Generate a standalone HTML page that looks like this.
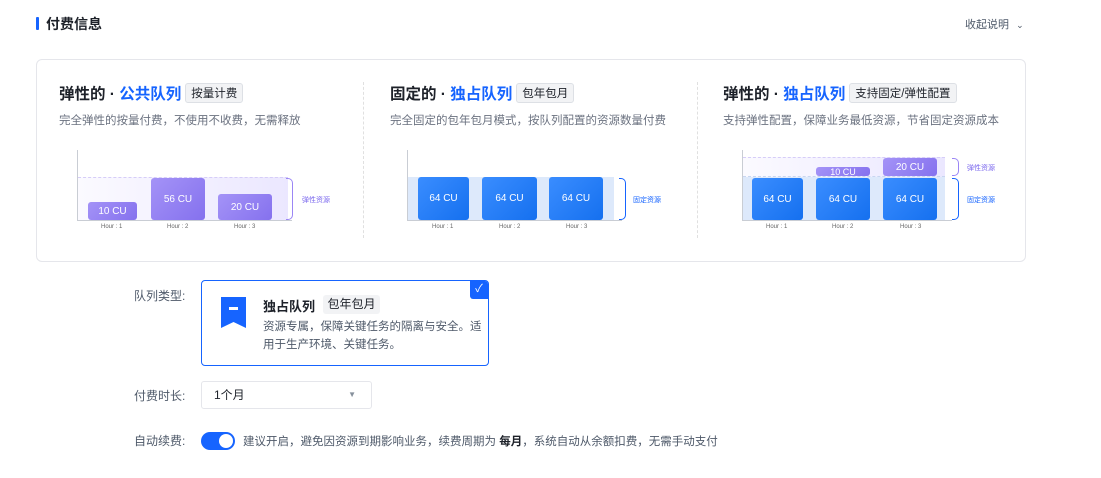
<!DOCTYPE html>
<html><head><meta charset="utf-8"><style>
*{margin:0;padding:0;box-sizing:border-box}
body{width:1101px;height:478px;background:#fff;font-family:"Liberation Sans","Noto Sans CJK SC",sans-serif;position:relative;overflow:hidden;color:#1d2129}
.a{position:absolute;white-space:nowrap}
.t{font-size:15.5px;font-weight:bold;color:#1d2129}
.t b{color:#1664ff;font-weight:bold}
.tag{display:inline-block;font-size:11.5px;font-weight:normal;border:1px solid #dde0e5;background:#f2f3f5;border-radius:3px;padding:1px 5px;vertical-align:2px;margin-left:4px;color:#1d2129}
.sub{font-size:11.5px;color:#6b7280}
.bar{position:absolute;border-radius:3px;color:#fff;font-size:10px;display:flex;align-items:center;justify-content:center}
.p{background:linear-gradient(135deg,#a493f7,#8571ee)}
.b{background:linear-gradient(135deg,#3a8dff,#1570ef)}
.hr{position:absolute;font-size:6px;color:#666}
.lbl{position:absolute;font-size:12px;color:#4e5969}
</style></head><body>
<div class="a" style="left:36px;top:17px;width:3px;height:13px;background:#1664ff;border-radius:1px"></div>
<div class="a" style="left:46px;top:14px;font-size:14px;font-weight:bold">付费信息</div>
<div class="a" style="left:965px;top:16px;font-size:11px;color:#4e5969">收起说明 <span style="font-size:9px;margin-left:4px">&#8964;</span></div>

<div class="a" style="left:36px;top:59px;width:990px;height:203px;border:1px solid #e5e6eb;border-radius:6px"></div>
<div class="a" style="left:363px;top:82px;height:156px;border-left:1px dashed #e0e0e0"></div>
<div class="a" style="left:697px;top:82px;height:156px;border-left:1px dashed #e0e0e0"></div>

<!-- S1 -->
<div class="a t" style="left:59px;top:82px">弹性的 · <b>公共队列</b><span class="tag">按量计费</span></div>
<div class="a sub" style="left:59px;top:112px">完全弹性的按量付费，不使用不收费，无需释放</div>
<div class="a" style="left:78px;top:177px;width:210px;height:43px;background:linear-gradient(90deg,#fbfaff,#ebe7ff);border-top:1px dashed #d6cdf8"></div>
<div class="a" style="left:77px;top:150px;height:71px;border-left:1px solid #c9cdd4"></div>
<div class="a" style="left:77px;top:220px;width:215px;border-top:1px solid #c9cdd4"></div>
<div class="bar p" style="left:88px;top:202px;width:49px;height:18px">10 CU</div>
<div class="bar p" style="left:151px;top:178px;width:54px;height:42px">56 CU</div>
<div class="bar p" style="left:218px;top:194px;width:54px;height:26px">20 CU</div>
<div class="hr" style="left:101px;top:224px">Hour : 1</div>
<div class="hr" style="left:167px;top:224px">Hour : 2</div>
<div class="hr" style="left:234px;top:224px">Hour : 3</div>
<div class="a" style="left:286px;top:178px;width:7px;height:42px;border:1px solid #9b86f5;border-left:none;border-radius:0 5px 5px 0"></div>
<div class="a" style="left:302px;top:195px;font-size:7px;color:#7b68ee">弹性资源</div>

<!-- S2 -->
<div class="a t" style="left:390px;top:82px">固定的 · <b>独占队列</b><span class="tag">包年包月</span></div>
<div class="a sub" style="left:390px;top:112px">完全固定的包年包月模式，按队列配置的资源数量付费</div>
<div class="a" style="left:408px;top:177px;width:206px;height:43px;background:#dde9fb"></div>
<div class="a" style="left:407px;top:150px;height:71px;border-left:1px solid #c9cdd4"></div>
<div class="a" style="left:407px;top:220px;width:215px;border-top:1px solid #c9cdd4"></div>
<div class="bar b" style="left:418px;top:177px;width:51px;height:43px">64 CU</div>
<div class="bar b" style="left:482px;top:177px;width:55px;height:43px">64 CU</div>
<div class="bar b" style="left:549px;top:177px;width:54px;height:43px">64 CU</div>
<div class="hr" style="left:432px;top:224px">Hour : 1</div>
<div class="hr" style="left:499px;top:224px">Hour : 2</div>
<div class="hr" style="left:566px;top:224px">Hour : 3</div>
<div class="a" style="left:619px;top:178px;width:7px;height:42px;border:1px solid #1664ff;border-left:none;border-radius:0 5px 5px 0"></div>
<div class="a" style="left:633px;top:195px;font-size:7px;color:#1664ff">固定资源</div>

<!-- S3 -->
<div class="a t" style="left:723px;top:82px">弹性的 · <b>独占队列</b><span class="tag">支持固定/弹性配置</span></div>
<div class="a sub" style="left:723px;top:112px">支持弹性配置，保障业务最低资源，节省固定资源成本</div>
<div class="a" style="left:743px;top:157px;width:202px;height:20px;background:linear-gradient(90deg,#fbfaff,#ebe7ff);border-top:1px dashed #d6cdf8;border-bottom:1px dashed #c8d6f0"></div>
<div class="a" style="left:743px;top:177px;width:202px;height:43px;background:#dde9fb"></div>
<div class="a" style="left:742px;top:150px;height:71px;border-left:1px solid #c9cdd4"></div>
<div class="a" style="left:742px;top:220px;width:210px;border-top:1px solid #c9cdd4"></div>
<div class="bar b" style="left:752px;top:178px;width:51px;height:42px">64 CU</div>
<div class="bar b" style="left:816px;top:178px;width:54px;height:42px">64 CU</div>
<div class="bar b" style="left:883px;top:178px;width:54px;height:42px">64 CU</div>
<div class="bar p" style="left:816px;top:167px;width:54px;height:9px;font-size:9px">10 CU</div>
<div class="bar p" style="left:883px;top:158px;width:54px;height:18px">20 CU</div>
<div class="hr" style="left:766px;top:224px">Hour : 1</div>
<div class="hr" style="left:832px;top:224px">Hour : 2</div>
<div class="hr" style="left:900px;top:224px">Hour : 3</div>
<div class="a" style="left:952px;top:158px;width:7px;height:18px;border:1px solid #9b86f5;border-left:none;border-radius:0 5px 5px 0"></div>
<div class="a" style="left:952px;top:178px;width:7px;height:42px;border:1px solid #1664ff;border-left:none;border-radius:0 5px 5px 0"></div>
<div class="a" style="left:967px;top:163px;font-size:7px;color:#7b68ee">弹性资源</div>
<div class="a" style="left:967px;top:195px;font-size:7px;color:#1664ff">固定资源</div>

<!-- form -->
<div class="lbl" style="left:134px;top:287px">队列类型:</div>
<div class="a" style="left:201px;top:280px;width:288px;height:86px;border:1px solid #1664ff;border-radius:4px;overflow:hidden">
<div class="a" style="right:0;top:0;width:18px;height:18px;background:#1664ff;border-bottom-left-radius:3px;color:#fff;font-size:11px;text-align:center;line-height:17px">✓</div>
</div>
<svg class="a" style="left:221px;top:297px" width="25" height="31" viewBox="0 0 25 31"><path d="M0 0H25V31L12.5 25L0 31Z" fill="#1664ff"/><rect x="8" y="10" width="9" height="3" fill="#fff"/></svg>
<div class="a" style="left:263px;top:296px;font-size:13px;font-weight:bold">独占队列</div>
<div class="a" style="left:323px;top:295px;width:57px;height:19px;background:#f2f3f5;border-radius:3px;font-size:12px;text-align:center;line-height:19px">包年包月</div>
<div class="a" style="left:263px;top:318px;font-size:11.5px;color:#4e5969;line-height:18px;white-space:normal;width:222px">资源专属，保障关键任务的隔离与安全。适用于生产环境、关键任务。</div>

<div class="lbl" style="left:134px;top:387px">付费时长:</div>
<div class="a" style="left:201px;top:381px;width:171px;height:28px;border:1px solid #e5e6eb;border-radius:3px;font-size:12px;line-height:26px;padding-left:12px">1个月<span style="position:absolute;right:15px;top:0;font-size:8px;color:#86909c">▼</span></div>

<div class="lbl" style="left:134px;top:432px">自动续费:</div>
<div class="a" style="left:201px;top:432px;width:34px;height:18px;background:#1664ff;border-radius:9px"><div style="position:absolute;right:2px;top:2px;width:14px;height:14px;border-radius:50%;background:#fff"></div></div>
<div class="a" style="left:243px;top:433px;font-size:11.5px;color:#4e5969">建议开启，避免因资源到期影响业务，续费周期为 <b style="color:#1d2129">每月</b>，系统自动从余额扣费，无需手动支付</div>
</body></html>
